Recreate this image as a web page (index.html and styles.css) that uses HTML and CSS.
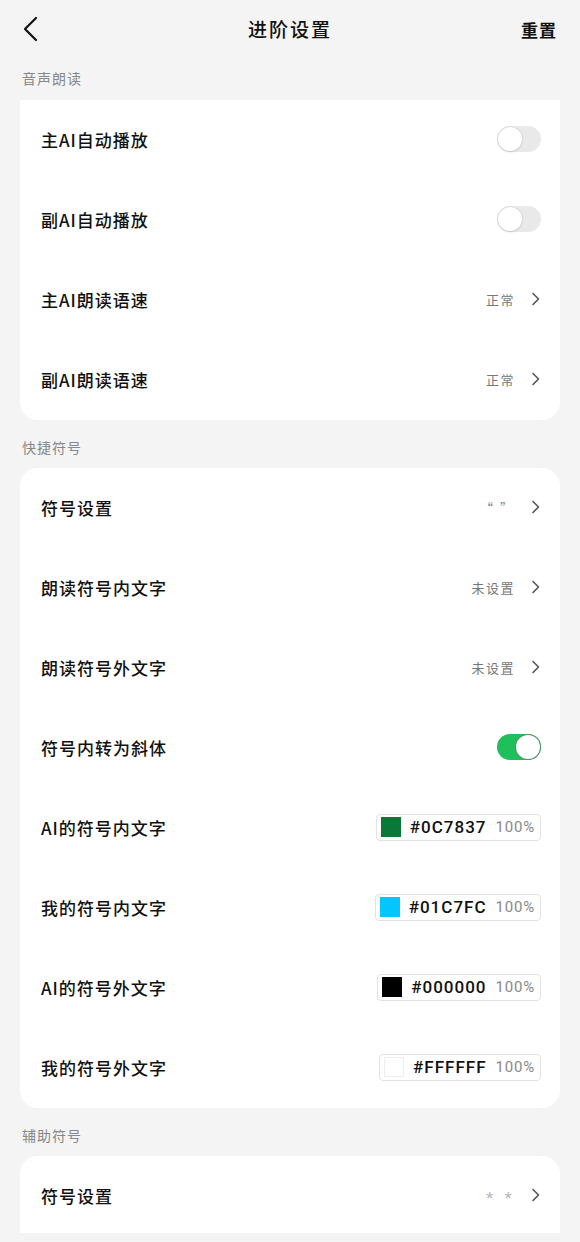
FILE: index.html
```html
<!DOCTYPE html>
<html lang="zh-CN">
<head>
<meta charset="utf-8">
<title>进阶设置</title>
<link rel="stylesheet" href="styles.css">
</head>
<body>
<header class="topbar">
  <svg class="back" width="16" height="26" viewBox="0 0 16 26"><path d="M14 2 L3 13 L14 24" fill="none" stroke="#111" stroke-width="2.2" stroke-linecap="round" stroke-linejoin="round"/></svg>
  <h1 class="title">进阶设置</h1>
  <span class="reset">重置</span>
</header>

<div class="section-label first">音声朗读</div>
<section class="card card-top-square">
  <div class="row"><span class="row-label">主AI自动播放</span><span class="toggle"><span class="knob"></span></span></div>
  <div class="row"><span class="row-label">副AI自动播放</span><span class="toggle"><span class="knob"></span></span></div>
  <div class="row"><span class="row-label">主AI朗读语速</span><span class="row-right"><span class="value">正常</span><svg class="chev" width="9" height="14" viewBox="0 0 9 14"><path d="M2 1.5 L7.5 7 L2 12.5" fill="none" stroke="#555" stroke-width="1.6" stroke-linecap="round" stroke-linejoin="round"/></svg></span></div>
  <div class="row"><span class="row-label">副AI朗读语速</span><span class="row-right"><span class="value">正常</span><svg class="chev" width="9" height="14" viewBox="0 0 9 14"><path d="M2 1.5 L7.5 7 L2 12.5" fill="none" stroke="#555" stroke-width="1.6" stroke-linecap="round" stroke-linejoin="round"/></svg></span></div>
</section>

<div class="section-label">快捷符号</div>
<section class="card">
  <div class="row"><span class="row-label">符号设置</span><span class="row-right"><span class="value quote">“ ”</span><svg class="chev" width="9" height="14" viewBox="0 0 9 14"><path d="M2 1.5 L7.5 7 L2 12.5" fill="none" stroke="#555" stroke-width="1.6" stroke-linecap="round" stroke-linejoin="round"/></svg></span></div>
  <div class="row"><span class="row-label">朗读符号内文字</span><span class="row-right"><span class="value">未设置</span><svg class="chev" width="9" height="14" viewBox="0 0 9 14"><path d="M2 1.5 L7.5 7 L2 12.5" fill="none" stroke="#555" stroke-width="1.6" stroke-linecap="round" stroke-linejoin="round"/></svg></span></div>
  <div class="row"><span class="row-label">朗读符号外文字</span><span class="row-right"><span class="value">未设置</span><svg class="chev" width="9" height="14" viewBox="0 0 9 14"><path d="M2 1.5 L7.5 7 L2 12.5" fill="none" stroke="#555" stroke-width="1.6" stroke-linecap="round" stroke-linejoin="round"/></svg></span></div>
  <div class="row"><span class="row-label">符号内转为斜体</span><span class="toggle on"><span class="knob"></span></span></div>
  <div class="row"><span class="row-label">AI的符号内文字</span><span class="chip"><span class="swatch" style="background:#0C7837"></span><span class="hex">#0C7837</span><span class="pct">100%</span></span></div>
  <div class="row"><span class="row-label">我的符号内文字</span><span class="chip"><span class="swatch" style="background:#01C7FC"></span><span class="hex">#01C7FC</span><span class="pct">100%</span></span></div>
  <div class="row"><span class="row-label">AI的符号外文字</span><span class="chip"><span class="swatch" style="background:#000000"></span><span class="hex">#000000</span><span class="pct">100%</span></span></div>
  <div class="row"><span class="row-label">我的符号外文字</span><span class="chip"><span class="swatch swatch-white" style="background:#FFFFFF"></span><span class="hex">#FFFFFF</span><span class="pct">100%</span></span></div>
</section>

<div class="section-label">辅助符号</div>
<section class="card card-bottom-cut">
  <div class="row"><span class="row-label">符号设置</span><span class="row-right"><span class="value stars">* *</span><svg class="chev" width="9" height="14" viewBox="0 0 9 14"><path d="M2 1.5 L7.5 7 L2 12.5" fill="none" stroke="#555" stroke-width="1.6" stroke-linecap="round" stroke-linejoin="round"/></svg></span></div>
</section>
</body>
</html>
```

FILE: styles.css
```css
* { box-sizing: border-box; }

html, body {
  margin: 0;
  padding: 0;
  background: #f4f4f4;
  font-family: "Noto Sans CJK SC", "Noto Sans", sans-serif;
  color: #111;
}

body {
  width: 580px;
  height: 1242px;
  overflow: hidden;
}

.topbar {
  height: 58px;
  display: flex;
  align-items: center;
  justify-content: space-between;
  padding: 0 23px 0 22px;
  position: relative;
}

.back { display: block; }

.title {
  margin: 0;
  font-size: 19px;
  font-weight: 500;
  letter-spacing: 2px;
  position: absolute;
  left: 0;
  right: 0;
  text-align: center;
  line-height: 58px;
  pointer-events: none;
}

.reset {
  font-size: 17px;
  font-weight: 700;
  letter-spacing: 1px;
}

.section-label {
  padding: 17px 22px 11px;
  font-size: 14px;
  line-height: 20px;
  color: #888;
  letter-spacing: 1px;
}

.section-label.first { padding-top: 10px; padding-bottom: 12px; }

.card {
  margin: 0 20px;
  background: #fff;
  border-radius: 18px;
  overflow: hidden;
}

.card-top-square {
  border-top-left-radius: 0;
  border-top-right-radius: 0;
}

.card-bottom-cut {
  border-bottom-left-radius: 0;
  border-bottom-right-radius: 0;
  height: 77px;
}

.row {
  height: 80px;
  display: flex;
  align-items: center;
  justify-content: space-between;
  padding: 0 19px 2px 21px;
}

.row-label {
  font-size: 17px;
  font-weight: 500;
  letter-spacing: 1px;
}

.row-right {
  display: flex;
  align-items: center;
  gap: 16px;
  padding-right: 1px;
}

.value {
  font-size: 13px;
  color: #777;
  letter-spacing: 1.5px;
}

.quote { color: #888; letter-spacing: 2px; }
.stars {
  font-family: "Liberation Sans", Arial, sans-serif;
  color: #b5b5b5;
  letter-spacing: 3px;
  font-size: 19px;
  line-height: 14px;
  padding-top: 8px;
}

.chev { display: block; }

.toggle {
  width: 44px;
  height: 26px;
  border-radius: 13px;
  background: #e9e9e9;
  position: relative;
  display: block;
}

.toggle .knob {
  position: absolute;
  top: 1px;
  left: 1px;
  width: 24px;
  height: 24px;
  border-radius: 50%;
  background: #fff;
  box-shadow: 0 0 0 0.5px #cfcfcf, 0 1px 2px rgba(0,0,0,0.18);
}

.toggle.on { background: #1fbf5b; }
.toggle.on .knob { left: 19px; box-shadow: 0 0 0 1px #5a8f6c; }

.chip {
  display: flex;
  align-items: center;
  height: 27px;
  padding: 0 5px 0 4px;
  border: 1px solid #e2e2e2;
  border-radius: 4px;
  background: #fff;
  line-height: 1;
}

.swatch {
  width: 20px;
  height: 20px;
  display: block;
  margin-right: 9px;
}

.swatch-white { border: 1px solid #eee; }

.hex {
  font-family: Roboto, "Liberation Sans", Arial, sans-serif;
  font-size: 17px;
  font-weight: 500;
  letter-spacing: 1px;
  color: #111;
  margin-right: 9px;
}

.pct {
  font-family: Roboto, "Liberation Sans", Arial, sans-serif;
  font-size: 15px;
  letter-spacing: 0.8px;
  color: #888;
}
```
